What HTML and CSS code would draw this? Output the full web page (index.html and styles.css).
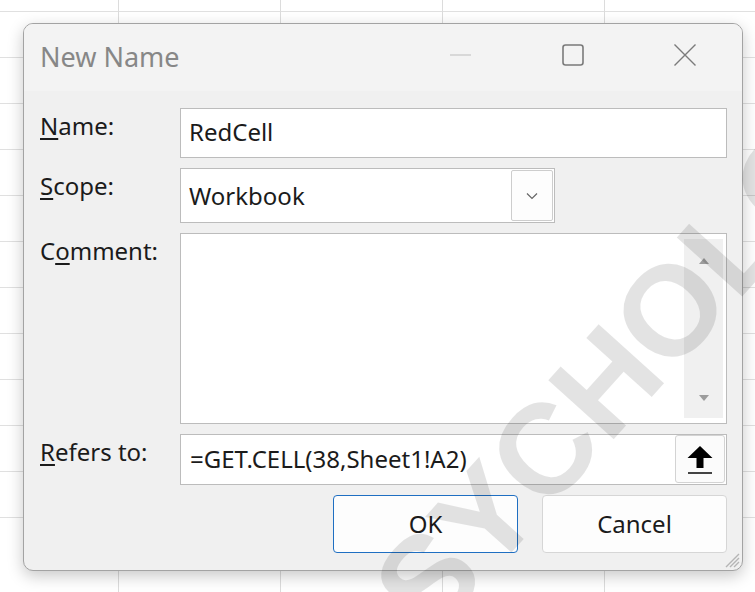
FILE: index.html
```html
<!DOCTYPE html>
<html lang="en">
<head>
<meta charset="utf-8">
<title>New Name</title>
<link rel="stylesheet" href="styles.css">
</head>
<body>
  <div class="dialog">
    <div class="titlebar">
      <span class="title">New Name</span>
      <div class="caption-buttons">
        <svg class="cap-btn" width="24" height="24" viewBox="0 0 24 24"><line x1="1" y1="12" x2="22" y2="12" stroke="#cfcfcf" stroke-width="1.4"/></svg>
        <svg class="cap-btn" width="24" height="24" viewBox="0 0 24 24"><rect x="2" y="2" width="20" height="20" rx="2.5" fill="none" stroke="#7a7a7a" stroke-width="1.6"/></svg>
        <svg class="cap-btn" width="24" height="24" viewBox="0 0 24 24"><path d="M1.5 1.5 L22.5 22.5 M22.5 1.5 L1.5 22.5" stroke="#7a7a7a" stroke-width="1.4" fill="none"/></svg>
      </div>
    </div>

    <div class="form">
      <label class="label"><u>N</u>ame:</label>
      <div class="field field-name">RedCell</div>

      <label class="label"><u>S</u>cope:</label>
      <div class="scope-row">
        <div class="field field-scope">
          <span class="scope-text">Workbook</span>
          <span class="drop-btn">
            <svg width="12" height="8" viewBox="0 0 12 8"><path d="M1 1.5 L6 6.5 L11 1.5" stroke="#666" stroke-width="1.2" fill="none"/></svg>
          </span>
        </div>
      </div>

      <label class="label">C<u>o</u>mment:</label>
      <div class="field field-comment">
        <div class="scrollbar">
          <svg width="12" height="8" viewBox="0 0 12 8"><path d="M1 7 L6 1 L11 7 Z" fill="#9c9c9c"/></svg>
          <svg width="12" height="8" viewBox="0 0 12 8"><path d="M1 1 L6 7 L11 1 Z" fill="#9c9c9c"/></svg>
        </div>
      </div>

      <label class="label"><u>R</u>efers to:</label>
      <div class="field field-refers">
        <span class="refers-text">=GET.CELL(38,Sheet1!A2)</span>
        <span class="collapse-btn">
          <svg width="26" height="30" viewBox="0 0 26 30"><path d="M13 0 L25.5 12 L16.5 12 L16.5 22 L9.5 22 L9.5 12 L0.5 12 Z" fill="#000"/><rect x="1" y="26" width="24" height="2" fill="#444"/></svg>
        </span>
      </div>

      <div class="actions">
        <button class="btn btn-ok">OK</button>
        <button class="btn">Cancel</button>
      </div>
    </div>

    <svg class="grip" width="20" height="20" viewBox="0 0 20 20">
      <path d="M19 6 L6 19 M19 10 L10 19 M19 14 L14 19" stroke="#b5b5b5" stroke-width="1.4" fill="none"/>
    </svg>
  </div>

  <div class="watermark">PSYCHOLOGY</div>
</body>
</html>
```

FILE: styles.css
```css
html, body {
  margin: 0;
  padding: 0;
  width: 755px;
  height: 592px;
  overflow: hidden;
}

body {
  position: relative;
  font-family: "Noto Sans", "Open Sans", sans-serif;
  color: #1b1b1b;
  background-color: #ffffff;
  background-image:
    repeating-linear-gradient(to right, transparent 0 161px, #dcdcdc 161px 162px),
    repeating-linear-gradient(to bottom, transparent 0 45px, #e0e0e0 45px 46px);
  background-position: -43px 0, 0 -34px;
  padding: 23px 0 0 23px;
  box-sizing: border-box;
}

/* window frame */
.dialog {
  position: relative;
  width: 720px;
  height: 548px;
  box-sizing: border-box;
  border: 1px solid #a3a3a3;
  border-radius: 10px;
  background: #f0f0f0;
  box-shadow: 0 5px 16px rgba(0, 0, 0, 0.22);
  display: flex;
  flex-direction: column;
  overflow: hidden;
}

.titlebar {
  height: 67px;
  box-sizing: border-box;
  background: #f3f3f3;
  display: flex;
  align-items: flex-start;
  padding: 14px 0 0 16px;
  flex-shrink: 0;
}

.title {
  font-size: 27px;
  line-height: 37px;
  color: #878787;
  flex: 1;
}

.caption-buttons {
  display: flex;
  align-items: center;
  gap: 88px;
  margin: 5px 45px 0 0;
}

.cap-btn {
  display: block;
}

/* form body */
.form {
  display: grid;
  grid-template-columns: 140px 547px;
  grid-template-rows: 50px 55px 191px 51px 58px;
  row-gap: 10px;
  padding: 17px 0 0 16px;
}

.label {
  font-size: 24px;
  line-height: 30px;
  padding-top: 3px;
  color: #1b1b1b;
}

.label u {
  text-decoration-thickness: 1.5px;
  text-underline-offset: 3px;
}

.field {
  background: #ffffff;
  border: 1px solid #bcbcbc;
  box-sizing: border-box;
  font-size: 24px;
}

.field-name {
  padding: 5px 0 0 8px;
  line-height: 36px;
}

.scope-row {
  display: flex;
}

.field-scope {
  width: 375px;
  display: flex;
  align-items: stretch;
  padding: 1px 1px 1px 0;
}

.scope-text {
  flex: 1;
  padding: 8px 0 0 8px;
  line-height: 36px;
}

.drop-btn {
  width: 40px;
  border: 1px solid #cdcdcd;
  border-radius: 2px;
  background: #fdfdfd;
  display: flex;
  align-items: center;
  justify-content: center;
}

.field-comment {
  display: flex;
  justify-content: flex-end;
  padding: 5px 3px 5px 0;
}

.scrollbar {
  width: 39px;
  background: #f0f0f0;
  display: flex;
  flex-direction: column;
  align-items: center;
  justify-content: space-between;
  padding: 18px 0 16px;
  box-sizing: border-box;
}

.field-refers {
  display: flex;
  align-items: stretch;
  padding: 0 1px 1px 0;
}

.refers-text {
  flex: 1;
  padding: 6px 0 0 9px;
  line-height: 36px;
}

.collapse-btn {
  width: 50px;
  border: 1px solid #d3d3d3;
  border-radius: 3px;
  background: #fbfbfb;
  display: flex;
  align-items: center;
  justify-content: center;
  padding-top: 4px;
  box-sizing: border-box;
}

.actions {
  grid-column: 1 / 3;
  display: flex;
  justify-content: flex-end;
  gap: 24px;
}

.btn {
  width: 185px;
  height: 58px;
  font-family: inherit;
  font-size: 24px;
  color: #1b1b1b;
  background: #fdfdfd;
  border: 1px solid #d6d6d6;
  border-radius: 4px;
  padding: 0 0 2px;
}

.btn-ok {
  border-color: #1f6fc2;
}

.grip {
  position: absolute;
  right: 2px;
  bottom: 2px;
}

/* diagonal stamp over the screen */
.watermark {
  position: absolute;
  left: 342px;
  top: 611px;
  font-family: "Liberation Sans", Arial, sans-serif;
  font-weight: bold;
  font-size: 128px;
  line-height: 128px;
  color: rgba(0, 0, 0, 0.11);
  transform-origin: 0 50%;
  transform: rotate(-48deg);
  white-space: nowrap;
  pointer-events: none;
}
```
